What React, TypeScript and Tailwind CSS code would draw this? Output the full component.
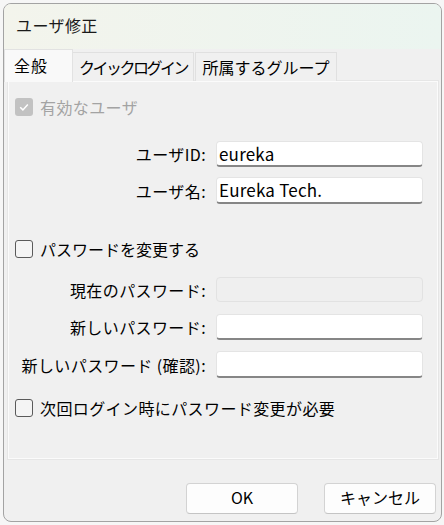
import React from "react";

const font = { fontFamily: '"Noto Sans CJK JP", "Noto Sans", sans-serif' };

function Check({ checked, disabled }: { checked?: boolean; disabled?: boolean }) {
  if (checked && disabled) {
    return (
      <div className="w-[18px] h-[18px] rounded-[3px] bg-[#c2c2c2] flex items-center justify-center">
        <svg width="12" height="12" viewBox="0 0 12 12">
          <path d="M2.2 6.3 L4.9 8.9 L9.8 3.4" fill="none" stroke="#ffffff" strokeWidth="1.5" />
        </svg>
      </div>
    );
  }
  return <div className="w-[18px] h-[18px] rounded-[3px] border border-[#5a5a5a] bg-[#f4f4f4]" />;
}

function Row({
  label,
  value,
  disabled,
  h,
  mt,
}: {
  label: string;
  value?: string;
  disabled?: boolean;
  h: string;
  mt: string;
}) {
  return (
    <div className={`flex items-center ${mt} ${h}`}>
      <div className="w-[198px] text-right text-[16px] leading-none text-black pr-[1px] whitespace-nowrap tracking-[0.4px]">{label}</div>
      <div
        className={
          disabled
            ? `ml-[9px] w-[207px] h-full rounded-[4px] border border-[#e2e2e2] bg-[#efefef]`
            : `ml-[9px] w-[207px] h-full rounded-[4px] border border-[#e4e4e4] border-b-[2px] border-b-[#868686] bg-white flex items-center pl-[2px] text-[17px] text-black tracking-[0.2px]`
        }
      >
        {value}
      </div>
    </div>
  );
}

export default function App() {
  return (
    <div className="w-[444px] h-[525px] bg-[#f6f6f6] overflow-hidden" style={font}>
      <div className="ml-[3px] mt-[3px] w-[439px] h-[519px] rounded-[8px] border border-[#a3a3a3] bg-[#f0f0f0] overflow-hidden flex flex-col">
        {/* title bar */}
        <div className="h-[45px] shrink-0 bg-gradient-to-r from-[#f3f4ec] to-[#ebf5f0] flex items-center pl-[12px] pb-[4px]">
          <span className="text-[16px] text-[#1a1a1a] leading-none tracking-[0.4px]">ユーザ修正</span>
        </div>
        {/* tabs */}
        <div className="h-[32px] shrink-0 flex items-end relative z-10">
          <div className="w-[69px] h-[33px] mb-[-1px] bg-[#f9f9f9] border border-b-0 border-[#e2e2e2] flex items-center pl-[9px] pb-[3px] text-[16px] text-black leading-none tracking-[1px]">
            全般
          </div>
          <div className="w-[121px] h-[29px] bg-[#f0f0f0] border border-b-0 border-[#e0e0e0] border-l-0 flex items-center justify-center pb-[1px] text-[16px] text-black leading-none whitespace-nowrap tracking-[-2.5px]">
            クイックログイン
          </div>
          <div className="ml-[1px] w-[142px] h-[29px] bg-[#f0f0f0] border border-b-0 border-[#e0e0e0] flex items-center justify-center pb-[1px] text-[16px] text-black leading-none whitespace-nowrap">
            所属するグループ
          </div>
        </div>
        {/* panel */}
        <div className="ml-[4px] w-[430px] h-[378px] shrink-0 border border-[#fbfbfb] outline outline-1 outline-[#e6e6e6] bg-[#f0f0f0] flex flex-col">
          <div className="mt-[15px] h-[19px] flex items-center ml-[6px]">
            <Check checked disabled />
            <span className="ml-[7px] text-[16px] text-[#a3a3a3] leading-none tracking-[0.4px]">有効なユーザ</span>
          </div>
          <Row label="ユーザID:" value="eureka" mt="mt-[25px]" h="h-[26px]" />
          <Row label="ユーザ名:" value="Eureka Tech." mt="mt-[10px]" h="h-[27px]" />
          <div className="mt-[35px] h-[19px] flex items-center ml-[6px]">
            <Check />
            <span className="ml-[7px] text-[16px] text-black leading-none">パスワードを変更する</span>
          </div>
          <Row label="現在のパスワード:" disabled mt="mt-[19px]" h="h-[25px]" />
          <Row label="新しいパスワード:" mt="mt-[12px]" h="h-[26px]" />
          <Row label="新しいパスワード (確認):" mt="mt-[11px]" h="h-[27px]" />
          <div className="mt-[20px] h-[19px] flex items-center ml-[6px]">
            <Check />
            <span className="ml-[7px] text-[16px] text-black leading-none tracking-[0.4px]">次回ログイン時にパスワード変更が必要</span>
          </div>
        </div>
        {/* buttons */}
        <div className="mt-[24px] flex justify-end pr-[5px] gap-[26px]">
          <button className="w-[112px] h-[31px] rounded-[4px] border border-[#d3d3d3] border-b-[#c4c4c4] bg-[#fdfdfd] text-[16px] text-black leading-none pb-[3px]">
            OK
          </button>
          <button className="w-[112px] h-[31px] rounded-[4px] border border-[#d3d3d3] border-b-[#c4c4c4] bg-[#fdfdfd] text-[16px] text-black leading-none pb-[3px]">
            キャンセル
          </button>
        </div>
      </div>
    </div>
  );
}
